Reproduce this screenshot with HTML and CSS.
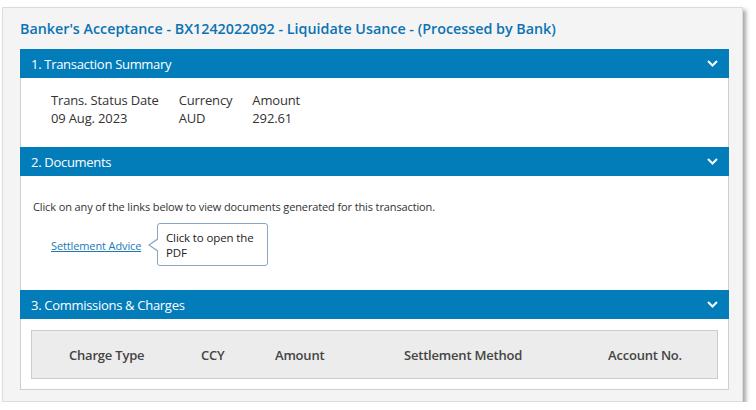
FILE: index.html
```html
<!DOCTYPE html>
<html lang="en">
<head>
  <meta charset="UTF-8">
  <title>Banker's Acceptance</title>
  <link rel="stylesheet" href="styles.css">
</head>
<body>

  <div class="panel">
    <h1 class="title">Banker's Acceptance - BX1242022092 - Liquidate Usance - (Processed by Bank)</h1>

    <div class="sections">

      <!-- 1. Transaction Summary -->
      <div class="section-head">
        <span>1. Transaction Summary</span>
        <svg class="chevron" viewBox="0 0 11 7"><path d="M1 1 L5.5 5.5 L10 1" /></svg>
      </div>
      <div class="summary">
        <div class="field">
          <div class="label">Trans. Status Date</div>
          <div class="value">09 Aug. 2023</div>
        </div>
        <div class="field">
          <div class="label">Currency</div>
          <div class="value">AUD</div>
        </div>
        <div class="field">
          <div class="label">Amount</div>
          <div class="value">292.61</div>
        </div>
      </div>

      <!-- 2. Documents -->
      <div class="section-head">
        <span>2. Documents</span>
        <svg class="chevron" viewBox="0 0 11 7"><path d="M1 1 L5.5 5.5 L10 1" /></svg>
      </div>
      <div class="documents">
        <p>Click on any of the links below to view documents generated for this transaction.</p>
        <div class="doc-link">
          <a href="#">Settlement Advice</a>
          <div class="tooltip">Click to open the PDF</div>
        </div>
      </div>

      <!-- 3. Commissions & Charges -->
      <div class="section-head">
        <span>3. Commissions &amp; Charges</span>
        <svg class="chevron" viewBox="0 0 11 7"><path d="M1 1 L5.5 5.5 L10 1" /></svg>
      </div>
      <div class="charges">
        <div class="charges-head">
          <div>Charge Type</div>
          <div>CCY</div>
          <div>Amount</div>
          <div>Settlement Method</div>
          <div>Account No.</div>
        </div>
      </div>

    </div>
  </div>

</body>
</html>
```

FILE: styles.css
```css
body {
  margin: 0;
  font-family: "Open Sans", "Noto Sans", sans-serif;
  background-color: #fff;
  color: #333;
}
.panel {
  width: 741px;
  height: 395px;
  margin: 7px 0 0 2px;
  padding: 0 13px 0 17px;
  box-sizing: border-box;
  background-color: #f4f4f4;
  border: 1px solid #dcdcdc;
  box-shadow: 3px 3px 4px rgba(0, 0, 0, 0.35);
}
.title {
  margin: 0;
  padding: 11px 0 10px 0;
  font-size: 14.3px;
  line-height: 20px;
  font-weight: 600;
  color: #0b73b3;
  white-space: nowrap;
}
.sections {
  background-color: #fff;
  border: 1px solid #cfcfcf;
  border-top: none;
}
.section-head {
  height: 29px;
  display: flex;
  align-items: center;
  justify-content: space-between;
  padding: 0 11px;
  background-color: #037cba;
  color: #fff;
  font-size: 13px;
  letter-spacing: -0.3px;
  margin: 0 -1px;
}
.chevron {
  width: 11px;
  height: 7px;
  fill: none;
  stroke: #fff;
  stroke-width: 2;
}
.summary {
  display: flex;
  gap: 20px;
  padding: 13px 30px 20px 30px;
  font-size: 13px;
  letter-spacing: -0.15px;
  line-height: 18px;
}
.label {
  font-weight: 500;
}
.documents {
  padding: 23px 12px 0 12px;
  height: 114px;
  box-sizing: border-box;
  font-size: 11px;
  letter-spacing: -0.12px;
}
.documents p {
  margin: 0;
  line-height: 16px;
}
.doc-link {
  position: relative;
  margin: 23px 0 0 18px;
  line-height: 16px;
}
.doc-link a {
  color: #1a79b8;
}
.tooltip {
  position: absolute;
  left: 106px;
  top: -15px;
  width: 93px;
  padding: 6px 8px 5px 8px;
  background-color: #fff;
  border: 1px solid #8aa6c4;
  border-radius: 3px;
  font-size: 11.5px;
  line-height: 15px;
  color: #222;
}
.tooltip::before,
.tooltip::after {
  content: "";
  position: absolute;
  top: 14px;
  border-style: solid;
  border-color: transparent;
}
.tooltip::before {
  left: -10px;
  border-width: 7px 10px 7px 0;
  border-right-color: #8aa6c4;
}
.tooltip::after {
  left: -8px;
  top: 15px;
  border-width: 6px 9px 6px 0;
  border-right-color: #fff;
}
.charges {
  padding: 11px 10px 10px 10px;
}
.charges-head {
  display: grid;
  grid-template-columns: 132px 74px 129px 204px 1fr;
  align-items: center;
  height: 49px;
  box-sizing: border-box;
  padding-left: 37px;
  background-color: #ececec;
  border: 1px solid #cccccc;
  font-size: 13px;
  font-weight: 600;
  letter-spacing: -0.2px;
  color: #444;
}
```
